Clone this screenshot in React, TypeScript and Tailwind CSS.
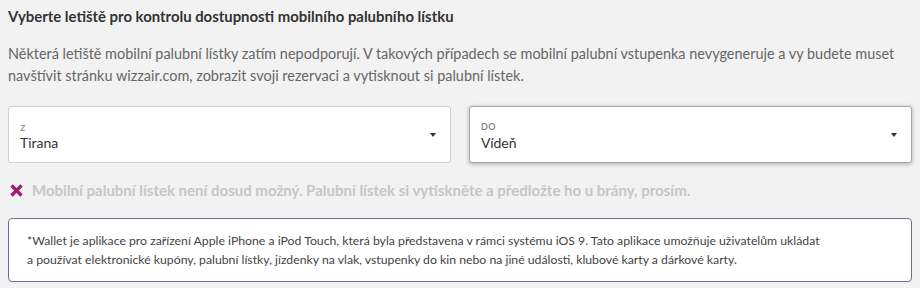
export default function App() {
  return (
    <div
      className="w-[920px] h-[288px] bg-[#f2f2f2] px-2 text-[#333]"
      style={{ fontFamily: '"Lato", "Noto Sans", sans-serif' }}
    >
      <h2 className="pt-[6px] text-[14.9px] font-bold leading-[20px] text-[#333]">
        Vyberte letiště pro kontrolu dostupnosti mobilního palubního lístku
      </h2>

      <p className="mt-[17px] pr-2 text-[14.45px] leading-[22px] text-[#666]">
        Některá letiště mobilní palubní lístky zatím nepodporují. V takových
        případech se mobilní palubní vstupenka nevygeneruje a vy budete muset
        navštívit stránku wizzair.com, zobrazit svoji rezervaci a vytisknout si
        palubní lístek.
      </p>

      <div className="mt-[19px] grid grid-cols-2 gap-[18px]">
        <SelectBox label="z" value="Tirana" />
        <SelectBox label="DO" value="Vídeň" active />
      </div>

      <div className="mt-[16px] flex items-center gap-[9px] text-[15px] font-bold text-[#c6c6c6]">
        <svg width="13" height="13" viewBox="0 0 13 13" className="ml-[2px]">
          <path
            d="M1.5 1.5 L11.5 11.5 M11.5 1.5 L1.5 11.5"
            stroke="#9b1b6f"
            strokeWidth="3.2"
          />
        </svg>
        <span>
          Mobilní palubní lístek není dosud možný. Palubní lístek si
          vytiskněte a předložte ho u brány, prosím.
        </span>
      </div>

      <div className="mt-[16px] rounded-[4px] border border-[#6e7290] bg-white pl-[18px] pr-4 py-[12px] text-[12.25px] leading-[19px] text-[#444]">
        *Wallet je aplikace pro zařízení Apple iPhone a iPod Touch, která byla
        představena v rámci systému iOS 9. Tato aplikace umožňuje uživatelům
        ukládat
        <br />a používat elektronické kupóny, palubní lístky, jízdenky na vlak,
        vstupenky do kin nebo na jiné události, klubové karty a dárkové karty.
      </div>
    </div>
  );
}

function SelectBox({
  label,
  value,
  active,
}: {
  label: string;
  value: string;
  active?: boolean;
}) {
  return (
    <div
      className={`flex h-[57px] items-center justify-between rounded-[3px] border bg-white pl-[11px] pr-[14px] ${
        active
          ? "border-[#a8a8a8] shadow-[0_1px_4px_rgba(0,0,0,0.3)]"
          : "border-[#cfcfcf]"
      }`}
    >
      <div className="flex flex-col pt-[4px]">
        <span
          className={`leading-[12px] text-[#888] ${
            active ? "text-[9px] font-bold tracking-[0.5px]" : "text-[12px]"
          }`}
        >
          {label}
        </span>
        <span className="text-[14px] leading-[19px] text-[#333]">{value}</span>
      </div>
      <svg width="6" height="4" viewBox="0 0 6 4">
        <path d="M0 0 L6 0 L3 4 Z" fill="#333" />
      </svg>
    </div>
  );
}
